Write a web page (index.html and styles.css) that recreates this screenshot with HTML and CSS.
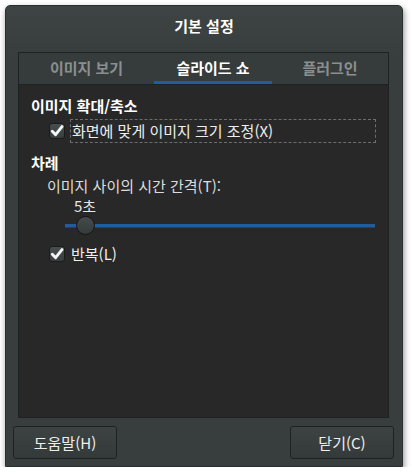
FILE: index.html
```html
<!DOCTYPE html>
<html lang="ko">
<head>
<meta charset="utf-8">
<link rel="stylesheet" href="styles.css">
</head>
<body>
<div class="window">
  <div class="titlebar">기본 설정</div>
  <div class="notebook">
    <div class="tabs">
      <div class="tab tab-first">이미지 보기</div>
      <div class="tab tab-mid active">슬라이드 쇼</div>
      <div class="tab tab-last">플러그인</div>
    </div>
    <div class="page">
      <div class="section-title">이미지 확대/축소</div>
      <div class="check-row">
        <span class="checkbox"><svg viewBox="0 0 14 14" width="14" height="14"><path d="M2.3 7.3 L5.6 10.6 L12 2.6" fill="none" stroke="#f4f4f4" stroke-width="2.9" stroke-linecap="round" stroke-linejoin="round"/></svg></span>
        <span class="check-label focused">화면에 맞게 이미지 크기 조정(X)</span>
      </div>
      <div class="section-title second">차례</div>
      <div class="field-label">이미지 사이의 시간 간격(T):</div>
      <div class="slider">
        <div class="slider-value">5초</div>
        <div class="slider-track">
          <div class="slider-knob"></div>
        </div>
      </div>
      <div class="check-row loop">
        <span class="checkbox"><svg viewBox="0 0 14 14" width="14" height="14"><path d="M2.3 7.3 L5.6 10.6 L12 2.6" fill="none" stroke="#f4f4f4" stroke-width="2.9" stroke-linecap="round" stroke-linejoin="round"/></svg></span>
        <span class="check-label">반복(L)</span>
      </div>
    </div>
  </div>
  <div class="buttons">
    <button class="btn">도움말(H)</button>
    <button class="btn">닫기(C)</button>
  </div>
</div>
</body>
</html>
```

FILE: styles.css
```css
html, body {
  margin: 0;
  padding: 0;
  background: #ffffff;
}
body {
  font-family: "Noto Sans CJK KR", "Noto Sans", sans-serif;
  font-size: 15px;
  color: #eeeeec;
}
.window {
  margin: 5px 0 0 5px;
  width: 398px;
  height: 462px;
  box-sizing: border-box;
  background: linear-gradient(to bottom, #3e4444 0px, #383e3e 50px, #383e3e 100%);
  border: 1px solid #2a2e2e;
  border-radius: 5px 5px 0 0;
  box-shadow: 1px 3px 6px rgba(0,0,0,0.45);
  display: flex;
  flex-direction: column;
}
.titlebar {
  height: 46px;
  display: flex;
  align-items: center;
  justify-content: center;
  font-weight: bold;
  font-size: 15px;
  color: #ffffff;
  padding-bottom: 8px;
  box-sizing: border-box;
}
.notebook {
  margin: 0 13px 0 12px;
  border: 1px solid #1f2222;
  display: flex;
  flex-direction: column;
  height: 366px;
  box-sizing: border-box;
}
.tabs {
  height: 31px;
  display: flex;
  background: #363c3c;
  border-bottom: 1px solid #1f2222;
}
.tab {
  display: flex;
  align-items: center;
  justify-content: center;
  font-weight: bold;
  font-size: 15px;
  color: #8b8f8f;
  box-sizing: border-box;
  padding-bottom: 3px;
}
.tab-first {
  width: 135px;
}
.tab-mid {
  width: 118px;
}
.tab-last {
  flex: 1;
}
.tab.active {
  color: #ffffff;
  border-bottom: 3px solid #215d9c;
  padding-bottom: 0;
}
.page {
  flex: 1;
  background: #282828;
  padding: 10px 12px 0 12px;
  display: flex;
  flex-direction: column;
}
.section-title {
  font-weight: bold;
  font-size: 15px;
  color: #ffffff;
  line-height: 22px;
}
.section-title.second {
  margin-top: 9px;
}
.check-row {
  display: flex;
  align-items: center;
  margin-left: 18px;
  margin-top: 2px;
  height: 24px;
}
.checkbox {
  width: 14px;
  height: 14px;
  border: 1px solid #1a1c1c;
  border-radius: 3px;
  background: linear-gradient(to bottom, #484e4e, #383d3d);
  display: flex;
  align-items: center;
  justify-content: center;
  flex: none;
}
.check-label {
  margin-left: 6px;
  line-height: 22px;
  color: #eeeeec;
}
.check-label.focused {
  flex: 1;
  border: 1px dashed #6a6e6e;
  padding-left: 1px;
  margin-left: 5px;
}
.field-label {
  margin-left: 16px;
  margin-top: 2px;
  line-height: 20px;
  color: #dcdcdc;
}
.slider {
  margin: 1px 1px 0 34px;
  height: 31px;
}
.slider-value {
  width: 40px;
  text-align: center;
  line-height: 18px;
  color: #e6e6e6;
}
.slider-track {
  position: relative;
  margin-top: 9px;
  height: 3px;
  background: #215d9c;
  border-bottom: 1px solid #3a3d3d;
}
.slider-knob {
  position: absolute;
  left: 11px;
  top: -8px;
  width: 19px;
  height: 19px;
  border-radius: 50%;
  background: linear-gradient(to bottom, #454b4b, #353a3a);
  border: 1px solid #141616;
  box-sizing: border-box;
}
.check-row.loop {
  margin-top: 14px;
}
.buttons {
  display: flex;
  justify-content: space-between;
  padding: 8px 8px 0 7px;
}
.btn {
  width: 104px;
  height: 33px;
  font-family: "Noto Sans CJK KR", "Noto Sans", sans-serif;
  font-size: 15px;
  color: #eeeeec;
  background: linear-gradient(to bottom, #3d4343, #343a3a);
  border: 1px solid #1e2222;
  border-radius: 3px;
  padding: 0;
}
```
